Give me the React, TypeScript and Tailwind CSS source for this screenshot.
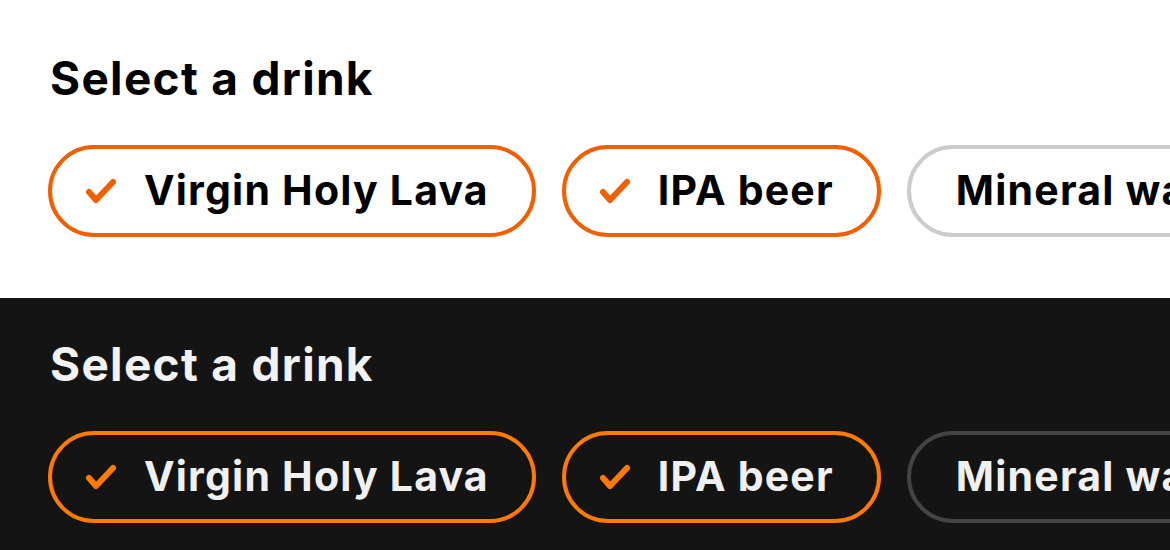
import React from 'react';

type Drink = { name: string; selected: boolean };

const drinks: Drink[] = [
  { name: 'Virgin Holy Lava', selected: true },
  { name: 'IPA beer', selected: true },
  { name: 'Mineral water', selected: false },
];

function Check({ className }: { className: string }) {
  return (
    <svg viewBox="0 0 32 28" className={className} fill="none">
      <path d="M4 15 L11 23 L28 5" stroke="currentColor" strokeWidth="6" strokeLinecap="round" strokeLinejoin="round" />
    </svg>
  );
}

function Picker({ dark }: { dark: boolean }) {
  return (
    <section className={dark ? 'bg-[#141414] h-[252px] pt-[38px] pl-[48px]' : 'bg-white h-[298px] pt-[50px] pl-[48px]'}>
      <h2 className={`pl-[2px] text-[46px] font-bold leading-[56px] tracking-[1.3px] ${dark ? 'text-[#f2f2f2]' : 'text-black'}`}>
        Select a drink
      </h2>
      <div className="mt-[39px] flex gap-[26px] whitespace-nowrap">
        {drinks.map((d) => (
          <div
            key={d.name}
            className={`flex h-[92px] shrink-0 items-center rounded-full border-[4px] ${
              d.selected ? 'pl-[33px] pr-[43px]' : 'pl-[45px] pr-[44px]'
            } ${
              d.selected
                ? dark
                  ? 'border-[#ff7a00]'
                  : 'border-[#f25f00]'
                : dark
                  ? 'border-[#444444]'
                  : 'border-[#cccccc]'
            }`}
          >
            {d.selected && (
              <Check className={`mr-[27px] h-[28px] w-[32px] ${dark ? 'text-[#ff7a00]' : 'text-[#f25f00]'}`} />
            )}
            <span className={`text-[41px] font-bold tracking-[1.2px] ${dark ? 'text-[#f0f0f0]' : 'text-black'}`}>
              {d.name}
            </span>
          </div>
        ))}
      </div>
    </section>
  );
}

export default function App() {
  return (
    <div className="h-[550px] w-[1170px] overflow-hidden" style={{ fontFamily: 'Inter, "Noto Sans", sans-serif' }}>
      <Picker dark={false} />
      <Picker dark={true} />
    </div>
  );
}
